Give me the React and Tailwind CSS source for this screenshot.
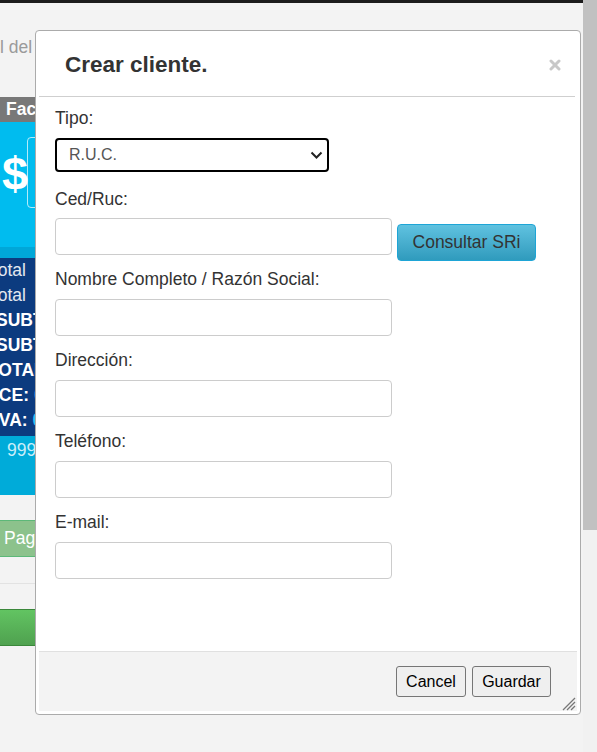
import React from 'react';

const Field = ({ label, children }) => (
  <div>
    <label className="block h-[25px] leading-[25px] mb-[7px] text-[17.5px] text-[#333]">{label}</label>
    {children}
  </div>
);

const TextInput = () => (
  <input
    type="text"
    className="block w-[337px] h-[37px] mb-[12px] border border-[#ccc] rounded-[4px] bg-white px-2 outline-none"
  />
);

const Background = () => (
  <div className="flex-1 min-w-0 flex flex-col overflow-hidden">
    <div className="h-[3px] bg-[#1c1c1c]" />
    <div className="w-[560px] flex flex-col">
      <div className="h-[94px] pt-[31px]">
        <p className="leading-[26px] text-[17.5px] text-[#9a9a9a] whitespace-nowrap">l del día</p>
      </div>
      <div className="h-[25px] bg-[#787878] pl-[6px] leading-[25px] text-[17.5px] font-bold text-white whitespace-nowrap">
        Facturación
      </div>
      <div className="h-[125px] bg-[#00bcef] pt-[15px]">
        <div className="h-[71px] flex items-center">
          <span className="w-[27px] pl-[2px] pt-[2px] text-[47px] leading-none font-bold text-white">$</span>
          <div className="h-[71px] w-[240px] border border-white/70 rounded-[4px]" />
        </div>
      </div>
      <div className="h-[11px] bg-[#00a7d8]" />
      <div className="h-[178px] bg-[#0c3b7f] text-[17.5px] leading-[25px] text-white whitespace-nowrap">
        <p className="-ml-[11px] text-[#e4e8f0]">Total<span className="ml-[30px]">0.00</span></p>
        <p className="-ml-[11px] text-[#e4e8f0]">Total<span className="ml-[30px]">0.00</span></p>
        <p className="-ml-[4px] font-bold">SUBTOTAL 12%:</p>
        <p className="-ml-[4px] font-bold">SUBTOTAL 0%:</p>
        <p className="-ml-[12px] font-bold">TOTAL:</p>
        <p className="-ml-[6px] font-bold">ICE: <span className="text-[#2ec3f2]">0.00</span></p>
        <p className="-ml-[6px] font-bold">IVA: <span className="text-[#2ec3f2]">0.00</span></p>
      </div>
      <div className="h-[59px] bg-[#00abd9] pt-[2px] pl-[7px] text-[17.5px] leading-[25px] text-[#cbeef9]">9999999999</div>
      <div className="h-[25px]" />
      <div className="h-[37px] bg-[#8cc28c] border-y border-[#5cb878] pl-[4px] flex items-center text-[17.5px] text-white whitespace-nowrap">
        Pagos
      </div>
      <div className="h-[26px]" />
      <div className="h-px bg-[#e2e2e2]" />
      <div className="h-[25px]" />
      <div className="h-[37px] bg-gradient-to-b from-[#62c462] to-[#4fa14f] border-y border-[#3a873a]" />
    </div>
  </div>
);

const Dialog = () => (
  <div className="absolute left-[35px] top-[30px] w-[546px] h-[685px] bg-white border border-[#ababab] rounded-[4px] p-[3px] flex flex-col">
    <div className="h-[62px] flex items-center justify-between pl-[26px] pr-[16px]">
      <h3 className="text-[22.5px] font-bold text-[#333]">Crear cliente.</h3>
      <svg width="12" height="12" viewBox="0 0 12 12">
        <g stroke="#c8c8c8" strokeWidth="3" strokeLinecap="round">
          <line x1="2" y1="2" x2="10" y2="10" />
          <line x1="10" y1="2" x2="2" y2="10" />
        </g>
      </svg>
    </div>
    <div className="h-px bg-[#cfcfcf] mr-[2px]" />
    <div className="flex-1 pl-[16px] pt-[9px]">
      <label className="block h-[25px] leading-[25px] mb-[7px] text-[17.5px] text-[#333]">Tipo:</label>
      <div className="w-[274px] h-[34px] mb-[15px] border-2 border-black rounded-[4px] flex items-center justify-between pl-[12px] pr-[4px]">
        <span className="text-[16px] text-[#555]">R.U.C.</span>
        <svg width="13" height="8" viewBox="0 0 13 8">
          <polyline points="1.5,1.5 6.5,6.5 11.5,1.5" fill="none" stroke="#222" strokeWidth="2" />
        </svg>
      </div>
      <label className="block h-[25px] leading-[25px] mb-[6px] text-[17.5px] text-[#333]">Ced/Ruc:</label>
      <div className="flex items-start">
        <TextInput />
        <button className="ml-[5px] mt-[6px] w-[139px] h-[37px] rounded-[4px] border border-[#1ea5d6] bg-gradient-to-b from-[#5fc2e0] to-[#2f9bbd] text-[17.5px] text-[#333]">
          Consultar SRi
        </button>
      </div>
      <Field label="Nombre Completo / Razón Social:"><TextInput /></Field>
      <Field label="Dirección:"><TextInput /></Field>
      <Field label="Teléfono:"><TextInput /></Field>
      <Field label="E-mail:"><TextInput /></Field>
    </div>
    <div className="h-[60px] border-t border-[#e0e0e0] bg-[#f3f3f3] flex items-center justify-end gap-[6px] pr-[26px]">
      <button className="w-[70px] h-[31px] bg-[#efefef] border border-[#767676] rounded-[3px] text-[16px] text-black">Cancel</button>
      <button className="w-[79px] h-[31px] bg-[#efefef] border border-[#767676] rounded-[3px] text-[16px] text-black">Guardar</button>
    </div>
    <svg className="absolute right-[4px] bottom-[3px]" width="15" height="15" viewBox="0 0 15 15">
      <g stroke="#777" strokeWidth="1.2">
        <line x1="2" y1="14" x2="14" y2="2" />
        <line x1="6" y1="14" x2="14" y2="6" />
        <line x1="10" y1="14" x2="14" y2="10" />
      </g>
    </svg>
  </div>
);

export default function App() {
  return (
    <div className="relative w-[597px] h-[752px] overflow-hidden bg-[#f3f3f3] flex font-['Liberation_Sans',Arial,sans-serif]">
      <Background />
      <div className="w-[14px] flex flex-col">
        <div className="h-[530px] bg-[#c1c1c1]" />
        <div className="flex-1 bg-[#f1f1f1]" />
      </div>
      <Dialog />
    </div>
  );
}
